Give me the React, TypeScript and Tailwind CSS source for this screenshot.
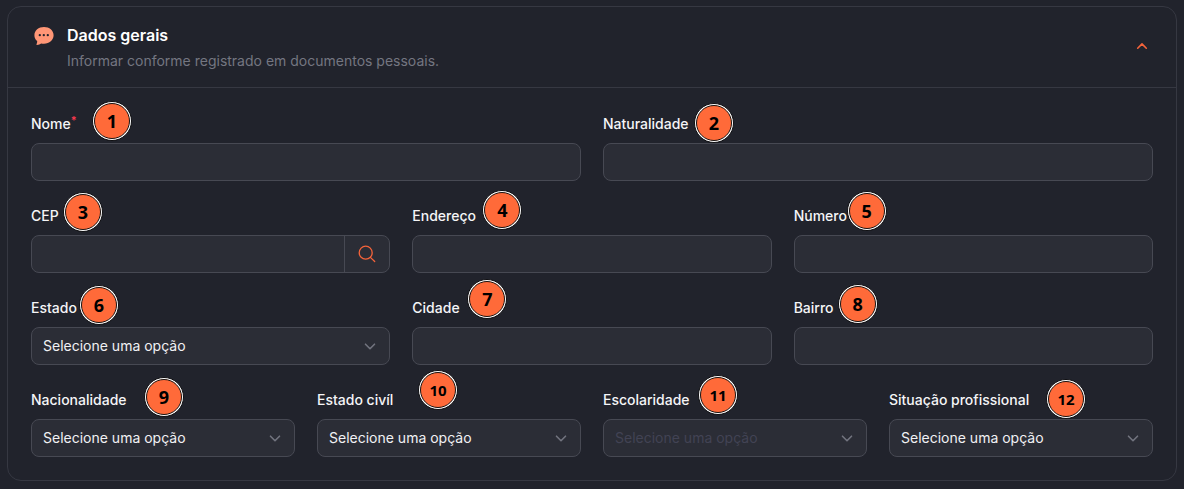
import { useState } from 'react';
import type { ReactNode } from 'react';
import { clsx } from 'clsx';

const controlClass =
  'block h-[38px] w-full rounded-lg border border-[#474953] bg-[#2b2d36] px-[11px] text-sm text-[#f1f1f4] outline-none focus:border-[#6b6d78]';

// Numbered marker that floats next to a field label
const Marker = ({ number, className }: { number: number; className: string }) => (
  <span
    className={clsx(
      'pointer-events-none absolute z-10 flex size-10 items-center justify-center rounded-full border border-[#0c0c0f] bg-white p-px',
      className
    )}
  >
    <span
      className={clsx(
        "flex size-full items-center justify-center rounded-full border border-[#1a1310] bg-[#ff6a39] font-['Noto_Sans',sans-serif] font-bold text-black",
        number > 9 ? 'text-[15px]' : 'text-lg'
      )}
    >
      {number}
    </span>
  </span>
);

interface FieldProps {
  id: string;
  label: string;
  marker: number;
  markerClass: string;
  required?: boolean;
  children: ReactNode;
}

const Field = ({ id, label, marker, markerClass, required, children }: FieldProps) => (
  <div className="relative">
    <label htmlFor={id} className="mb-[9px] flex h-5 items-center text-sm font-medium text-[#f5f5f7]">
      {label}
      {required && <span className="self-start text-[11px] leading-3 font-semibold text-[#f8384e]">*</span>}
    </label>
    {children}
    <Marker number={marker} className={markerClass} />
  </div>
);

const TextField = (props: Omit<FieldProps, 'children'>) => (
  <Field {...props}>
    <input id={props.id} type="text" required={props.required} className={controlClass} />
  </Field>
);

const SelectField = ({ disabled, ...props }: Omit<FieldProps, 'children'> & { disabled?: boolean }) => (
  <Field {...props}>
    <div className="relative">
      <select
        id={props.id}
        disabled={disabled}
        className={clsx(controlClass, 'appearance-none pr-9 disabled:text-[#424354] disabled:opacity-100')}
      >
        <option>Selecione uma opção</option>
      </select>
      <svg
        viewBox="0 0 12 12"
        className="pointer-events-none absolute top-[13px] right-[14px] size-3 text-[#72747f]"
        fill="none"
        stroke="currentColor"
        strokeWidth="1.6"
        strokeLinecap="round"
        strokeLinejoin="round"
      >
        <path d="M1.5 4.2 6 8.7 10.5 4.2" />
      </svg>
    </div>
  </Field>
);

const App = () => {
  const [open, setOpen] = useState(true);

  return (
    <main className="min-h-screen bg-[#21232c] px-[7px] pt-[6px] pb-2 font-['Inter',sans-serif]">
      <section className="rounded-[14px] border border-[#363842] bg-[#21232c]">
        <header className="flex items-center border-b border-[#363842] py-4 pr-[22px] pl-[26px]">
          <svg viewBox="0 0 20 18" className="mr-[13px] mb-[22px] h-[18px] w-5">
            <path
              fill="#ff9676"
              d="M10 0C4.6 0 .4 3.5.4 8.2c0 2.4 1 4.5 2.8 5.9.1 1.200-.2 2.300-.700 3.200-.2.400.1.700.5.600 1.700-.3 3.100-.8 4.200-1.500.9.200 1.800.300 2.800.300 5.400 0 9.600-3.700 9.600-8.500S15.400 0 10 0Z"
            />
            <circle cx="5.800" cy="8.200" r="1.150" fill="#21232c" />
            <circle cx="9.800" cy="8.200" r="1.150" fill="#21232c" />
            <circle cx="13.800" cy="8.200" r="1.150" fill="#21232c" />
          </svg>
          <div className="flex flex-1 flex-col gap-1">
            <h2 className="text-base font-semibold text-white">Dados gerais</h2>
            <p className="text-sm text-[#747681]">Informar conforme registrado em documentos pessoais.</p>
          </div>
          <button
            type="button"
            aria-label="Dados gerais"
            aria-expanded={open}
            onClick={() => setOpen(!open)}
            className="flex size-6 items-center justify-center text-[#f4633a]"
          >
            <svg
              viewBox="0 0 12 12"
              className={clsx('size-3', !open && 'rotate-180')}
              fill="none"
              stroke="currentColor"
              strokeWidth="1.6"
              strokeLinecap="round"
              strokeLinejoin="round"
            >
              <path d="M1.7 7.200 6 2.900 10.300 7.200" />
            </svg>
          </button>
        </header>

        {open && (
          <form className="flex flex-col gap-[25px] px-[23px] pt-[26px] pb-[23px]">
            <div className="grid grid-cols-2 gap-[22px]">
              <TextField id="nome" label="Nome" required marker={1} markerClass="-top-[13px] left-[61px]" />
              <TextField id="naturalidade" label="Naturalidade" marker={2} markerClass="-top-[11px] left-[91px]" />
            </div>

            <div className="grid grid-cols-3 gap-[22px]">
              <Field id="cep" label="CEP" marker={3} markerClass="-top-[14px] left-[32px]">
                <div className="flex h-[38px] overflow-hidden rounded-lg border border-[#474953] bg-[#2b2d36]">
                  <input
                    id="cep"
                    type="text"
                    className="min-w-0 flex-1 px-[11px] text-sm text-[#f1f1f4] outline-none"
                  />
                  <button
                    type="button"
                    aria-label="Buscar CEP"
                    className="flex w-[45px] items-center justify-center border-l border-[#474953] text-[#f4633a]"
                  >
                    <svg
                      viewBox="0 0 18 18"
                      className="size-[18px]"
                      fill="none"
                      stroke="currentColor"
                      strokeWidth="1.3"
                      strokeLinecap="round"
                    >
                      <circle cx="7.7" cy="7.7" r="6.5" />
                      <path d="m12.4 12.4 4.300 4.100" />
                    </svg>
                  </button>
                </div>
              </Field>
              <TextField id="endereco" label="Endereço" marker={4} markerClass="-top-4 left-[70px]" />
              <TextField id="numero" label="Número" marker={5} markerClass="-top-[15px] left-[53px]" />
            </div>

            <div className="grid grid-cols-3 gap-[22px]">
              <SelectField id="estado" label="Estado" marker={6} markerClass="-top-[13px] left-[48px]" />
              <TextField id="cidade" label="Cidade" marker={7} markerClass="-top-[19px] left-[55px]" />
              <TextField id="bairro" label="Bairro" marker={8} markerClass="-top-[14px] left-[44px]" />
            </div>

            <div className="grid grid-cols-4 gap-[22px]">
              <SelectField id="nacionalidade" label="Nacionalidade" marker={9} markerClass="-top-[13px] left-[113px]" />
              <SelectField id="estado-civil" label="Estado civíl" marker={10} markerClass="-top-5 left-[101px]" />
              <SelectField
                id="escolaridade"
                label="Escolaridade"
                disabled
                marker={11}
                markerClass="-top-[15px] left-[95px]"
              />
              <SelectField
                id="situacao"
                label="Situação profissional"
                marker={12}
                markerClass="-top-[11px] left-[157px]"
              />
            </div>
          </form>
        )}
      </section>
    </main>
  );
};

export default App;
